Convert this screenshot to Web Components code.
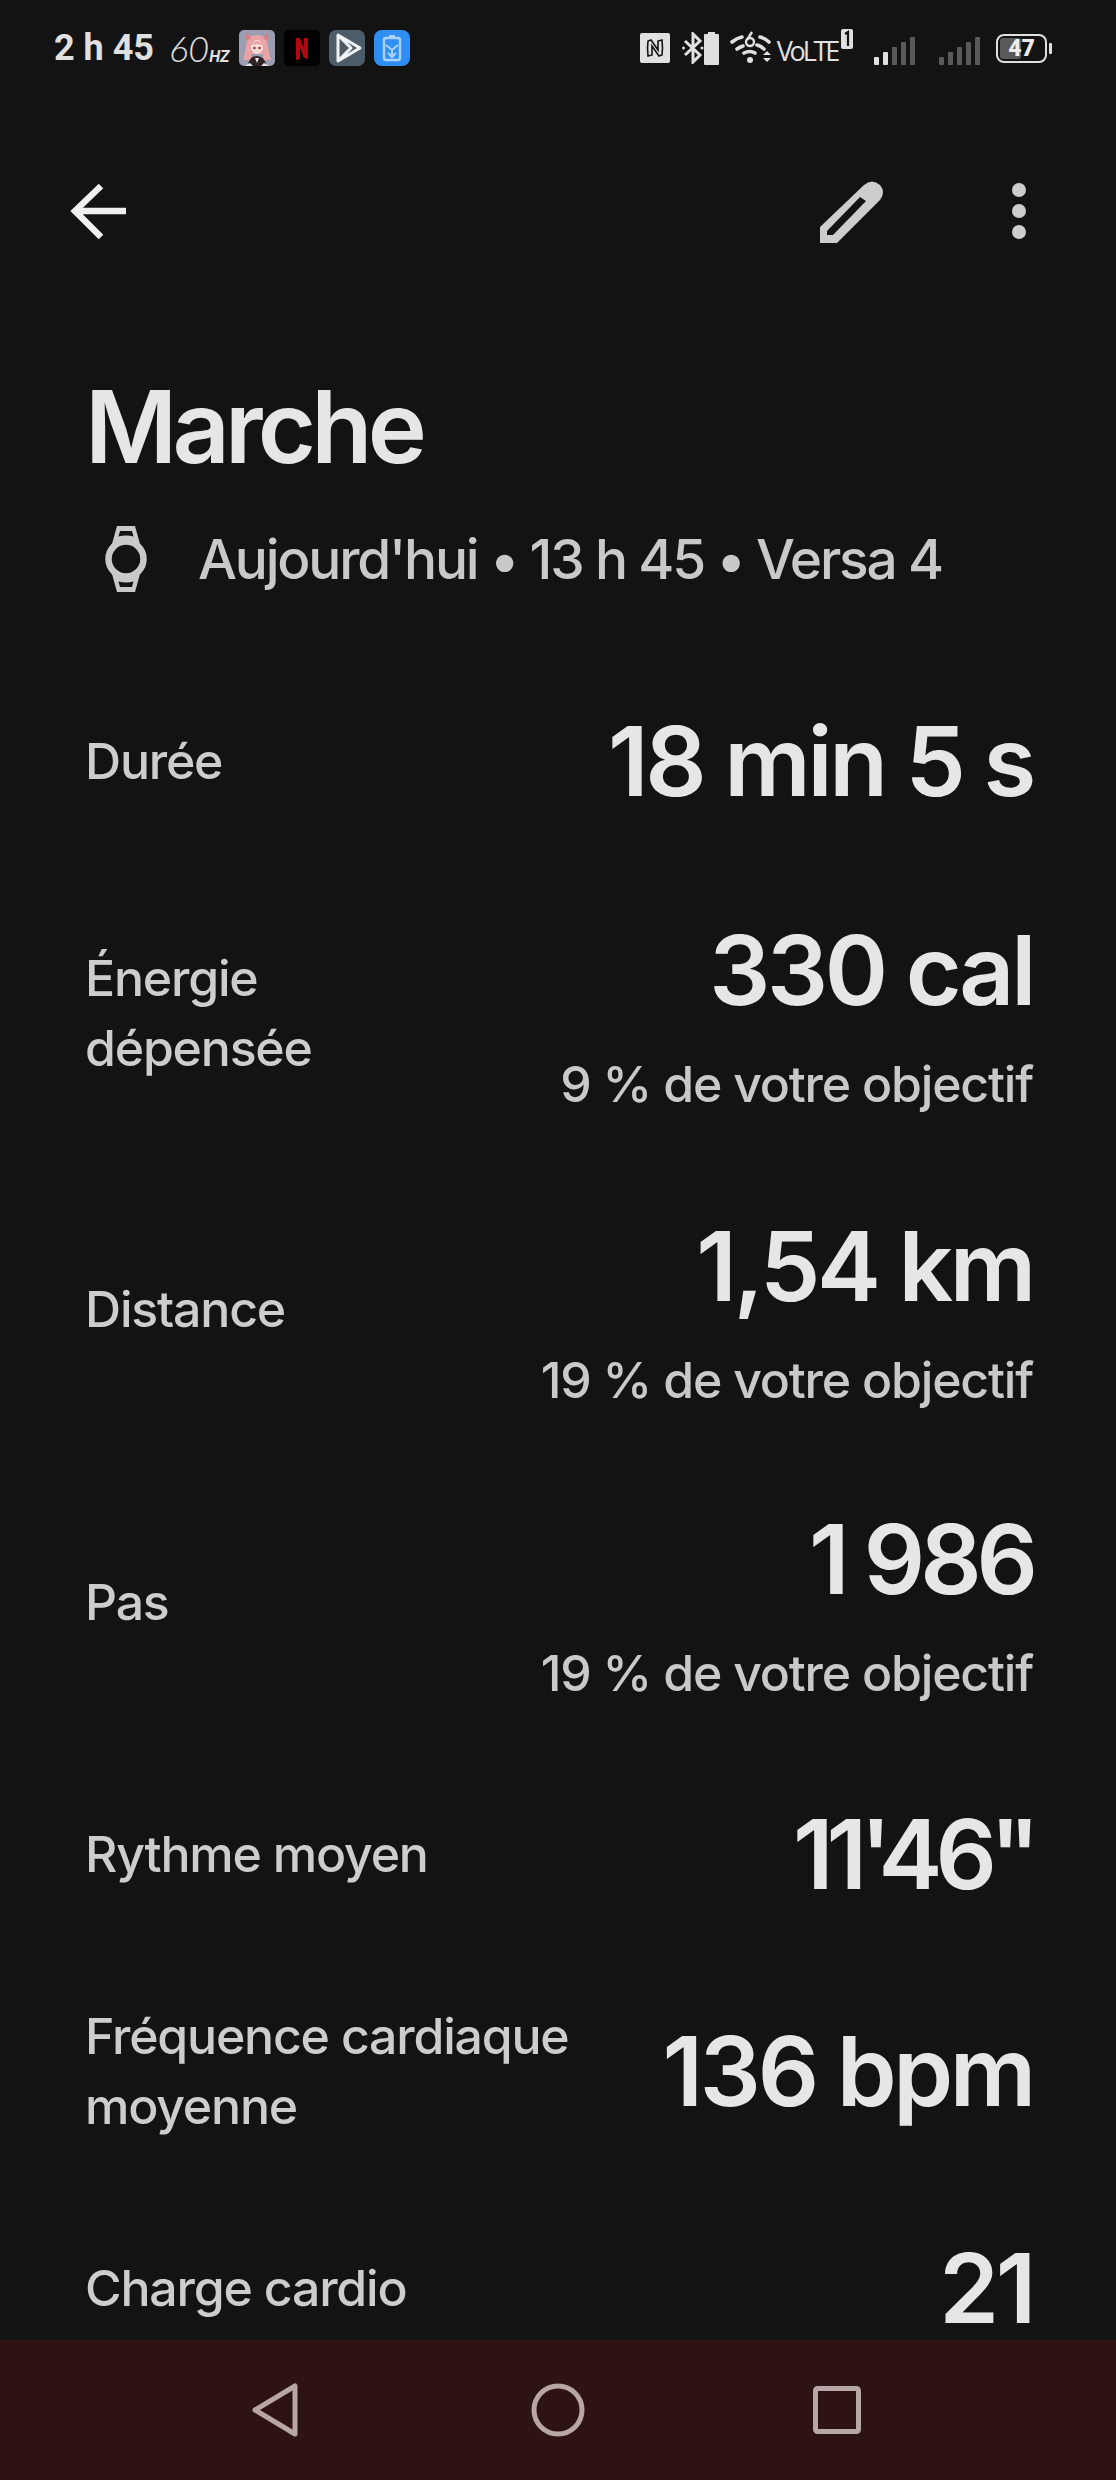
<!doctype html>
<html lang="fr">
<head>
<meta charset="utf-8">
<title>Marche</title>
<style>
  html, body { margin: 0; background: #131313; }
  body { font-family: Inter, "Noto Sans", sans-serif; }
</style>
</head>
<body>
<phone-screen>
  <status-bar></status-bar>
  <app-toolbar></app-toolbar>
  <workout-header heading="Marche" meta="Aujourd'hui • 13 h 45 • Versa 4"></workout-header>
  <stat-list>
    <stat-row><span slot="label">Durée</span><span slot="value">18 min 5 s</span></stat-row>
    <stat-row style="--gap: 79px"><span slot="label">Énergie<br>dépensée</span><span slot="value">330 cal</span><span slot="sub">9 % de votre objectif</span></stat-row>
    <stat-row style="--gap: 72px"><span slot="label">Distance</span><span slot="value">1,54 km</span><span slot="sub">19 % de votre objectif</span></stat-row>
    <stat-row style="--gap: 69px"><span slot="label">Pas</span><span slot="value" style="letter-spacing: -5px">1 986</span><span slot="sub">19 % de votre objectif</span></stat-row>
    <stat-row style="--gap: 71px"><span slot="label">Rythme moyen</span><span slot="value" style="letter-spacing: -7px">11'46"</span></stat-row>
    <stat-row style="--gap: 82px"><span slot="label">Fréquence cardiaque<br>moyenne</span><span slot="value">136 bpm</span></stat-row>
    <stat-row style="--gap: 92px; --value-lh: 110px"><span slot="label">Charge cardio</span><span slot="value">21</span></stat-row>
  </stat-list>
  <nav-bar></nav-bar>
</phone-screen>

<script>
// Page frame: full window column, the list takes what is left above the nav bar.
customElements.define('phone-screen', class extends HTMLElement {
  constructor() {
    super()
    this.attachShadow({ mode: 'open' }).innerHTML = `
      <style>
        :host { display: flex; flex-direction: column; height: 2480px; width: 1116px; overflow: hidden; background: #131313; color: #e3e3e3; }
      </style>
      <slot></slot>`
  }
})

customElements.define('status-bar', class extends HTMLElement {
  constructor() {
    super()
    this.attachShadow({ mode: 'open' }).innerHTML = `
      <style>
        :host { display: flex; align-items: center; height: 96px; padding: 0 64px 0 54px; box-sizing: border-box; color: #e0e0e0; flex: none; }
        .time { font: 700 36px Roboto, sans-serif; letter-spacing: 0; }
        .hz { font: italic 300 36px Lato, sans-serif; margin-left: 15px; width: 66px; white-space: nowrap; }
        .hz small { font: italic 700 16px Roboto, sans-serif; }
        .apps { display: flex; gap: 9px; margin-left: 4px; }
        .apps svg { display: block; width: 36px; height: 36px; }
        .right { margin-left: auto; display: flex; align-items: center; }
        svg { display: block; flex: none; }
      </style>
      <span class="time">2 h 45</span>
      <span class="hz">60<small>HZ</small></span>
      <div class="apps">
        <svg viewBox="0 0 36 36"><rect width="36" height="36" rx="5" fill="#9a9eb0"/><path d="M18 5q-10 0-11 11-1 8-3 14h8v-6h12v6h8q-2-6-3-14-1-11-11-11z" fill="#e9a3a6"/><path d="M8 2l4 7-6 1zM28 2l-4 7 6 1z" fill="#d77f84"/><ellipse cx="18" cy="17" rx="6" ry="7" fill="#f6dcd4"/><path d="M11 16q7-10 14 0-7-4-14 0z" fill="#e9a3a6"/><circle cx="15.5" cy="18" r="1.3" fill="#a03a44"/><circle cx="20.5" cy="18" r="1.3" fill="#a03a44"/><path d="M9 36q1-10 9-10t9 10z" fill="#2e2426"/><path d="M6 36l5-3 3 3zM30 36l-5-3-3 3zM16 28h4l-2 5z" fill="#ece6e2"/></svg>
        <svg viewBox="0 0 36 36"><rect width="36" height="36" rx="5" fill="#000"/><path d="M12 8h4l4 11V8h4v21l-4-1-4-10v11l-4 1z" fill="#b00a10"/></svg>
        <svg viewBox="0 0 36 36"><rect width="36" height="36" rx="7" fill="#4d5c69"/><path d="M9 5l22 13L9 31zM9 5l13 13L9 31" fill="none" stroke="#f2f4f5" stroke-width="3" stroke-linejoin="round"/></svg>
        <svg viewBox="0 0 36 36"><rect width="36" height="36" rx="8" fill="#2f8ff2"/><rect x="10" y="8" width="16" height="22" rx="2" fill="none" stroke="#a9d3fb" stroke-width="2.4"/><rect x="15" y="5" width="6" height="3" fill="#a9d3fb"/><path d="M12 15l6 5 6-5M18 20v6M14 23l4 4 4-4" fill="none" stroke="#a9d3fb" stroke-width="2"/></svg>
      </div>
      <div class="right">
        <svg width="30" height="30" viewBox="0 0 30 30" style="margin-right:12px"><rect width="30" height="30" rx="2" fill="#e0e0e0"/><path d="M8 8q-1 7 0 15l4-1V13l7 10 3-1q1-7 0-15l-4 1v9L11 7z" fill="none" stroke="#131313" stroke-width="1.6"/></svg>
        <svg width="22" height="32" viewBox="0 0 22 32"><path d="M3 9l15 14-7 7V2l7 7L3 23" fill="none" stroke="#e0e0e0" stroke-width="3"/><circle cx="1.5" cy="16" r="1.5" fill="#e0e0e0"/><circle cx="20" cy="16" r="1.5" fill="#e0e0e0"/></svg>
        <svg width="15" height="33" viewBox="0 0 15 33" style="margin-right:11px"><path d="M4 0h7v2h3a1 1 0 0 1 1 1v29a1 1 0 0 1-1 1H1a1 1 0 0 1-1-1V3a1 1 0 0 1 1-1h3z" fill="#e0e0e0"/></svg>
        <svg width="42" height="34" viewBox="0 0 42 34" style="margin-right:5px"><g fill="none" stroke="#e0e0e0" stroke-width="3.6" stroke-linecap="round"><path d="M2 11q5-4 10-5M7 18q3-2 6-3M30 6q5 1 9 5M27 14q4 1 7 4M14 22q6-3 11 0"/></g><circle cx="20" cy="29" r="3" fill="#e0e0e0"/><circle cx="20" cy="11" r="4" fill="none" stroke="#e0e0e0" stroke-width="2.4"/><path d="M22 1l-5 8" stroke="#e0e0e0" stroke-width="2.4"/><path d="M33 24l4-4 4 4zM33 27h8l-4 4z" fill="#e0e0e0"/></svg>
        <span style="font:500 27px 'Open Sans',sans-serif;letter-spacing:-3.2px;position:relative;top:2px">VoLTE</span>
        <svg width="12" height="20" viewBox="0 0 12 20" style="margin:-18px 21px 0 4px"><rect width="12" height="20" rx="2" fill="#e0e0e0"/><path d="M4 5l3-2v14" fill="none" stroke="#131313" stroke-width="2.2"/></svg>
        <svg width="42" height="28" viewBox="0 0 42 28" style="margin-top:6px"><g fill="#e0e0e0"><rect x="0" y="20" width="5" height="8" rx="1"/><rect x="9" y="15" width="5" height="13" rx="1"/></g><g fill="#5a5a5a"><rect x="18" y="10" width="5" height="18" rx="1"/><rect x="27" y="5" width="5" height="23" rx="1"/><rect x="36" y="0" width="5" height="28" rx="1"/></g></svg>
        <svg width="42" height="28" viewBox="0 0 42 28" style="margin:6px 15px 0 23px"><g fill="#5a5a5a"><rect x="0" y="20" width="5" height="8" rx="1"/><rect x="9" y="15" width="5" height="13" rx="1"/><rect x="18" y="10" width="5" height="18" rx="1"/><rect x="27" y="5" width="5" height="23" rx="1"/><rect x="36" y="0" width="5" height="28" rx="1"/></g></svg>
        <battery-pill level="47"></battery-pill>
      </div>`
  }
})

customElements.define('battery-pill', class extends HTMLElement {
  constructor() {
    super()
    this.attachShadow({ mode: 'open' }).innerHTML = `
      <style>
        :host { display: flex; align-items: center; gap: 2px; }
        .body { position: relative; box-sizing: border-box; width: 51px; height: 29px; border: 2.5px solid #e0e0e0; border-radius: 8px; display: flex; align-items: center; justify-content: center; font: 900 23px Roboto, sans-serif; color: #ededed; }
        .fill { position: absolute; left: 2px; top: 2px; bottom: 2px; width: 21px; background: #5a5a5a; border-radius: 3px; }
        span { position: relative; }
        .tip { width: 3px; height: 11px; background: #e0e0e0; border-radius: 1px; }
      </style>
      <div class="body"><div class="fill"></div><span>${this.getAttribute('level')}</span></div>
      <div class="tip"></div>`
  }
})

customElements.define('app-toolbar', class extends HTMLElement {
  constructor() {
    super()
    this.attachShadow({ mode: 'open' }).innerHTML = `
      <style>
        :host { display: flex; align-items: center; height: 100px; margin-top: 65px; padding: 0 89px 0 70px; flex: none; }
        svg { display: block; }
        .edit { margin-left: auto; margin-right: 127px; }
      </style>
      <svg width="60" height="60" viewBox="0 0 60 60"><path d="M56 30H6M31 5L5 30l26 26" fill="none" stroke="#f0f0f0" stroke-width="6.5"/></svg>
      <svg class="edit" width="64" height="66" viewBox="0 0 64 66"><path fill-rule="evenodd" d="M0 65V49L44 7Q52 0 60 7 66 14 60 22L17 65zM7 53L40 19l6 4L13 57H7z" fill="#cdcdcd"/></svg>
      <svg width="16" height="60" viewBox="0 0 16 60"><g fill="#cdcdcd"><circle cx="8" cy="9" r="7"/><circle cx="8" cy="30" r="7"/><circle cx="8" cy="51" r="7"/></g></svg>`
  }
})

customElements.define('workout-header', class extends HTMLElement {
  constructor() {
    super()
    this.attachShadow({ mode: 'open' }).innerHTML = `
      <style>
        :host { display: block; padding: 0 85px; margin-top: 106px; flex: none; }
        h1 { margin: 0; font-size: 100px; line-height: 120px; font-weight: 600; letter-spacing: -4.8px; color: #e6e6e6; }
        .meta { display: flex; align-items: center; margin-top: 37px; height: 70px; font-size: 55px; font-weight: 500; letter-spacing: -2.2px; color: #c9c9c9; }
        svg { display: block; margin: 0 51px 0 20px; flex: none; }
      </style>
      <h1>${this.getAttribute('heading')}</h1>
      <div class="meta">
        <svg width="42" height="68" viewBox="0 0 42 68"><circle cx="21" cy="34" r="17.5" fill="none" stroke="#c9c9c9" stroke-width="6.5"/><path fill-rule="evenodd" fill="#c9c9c9" d="M7 19L12 1h18l5 18-14-5zM15 6l-1.500 5.500q7.500-2 15 0L27 6zM7 49l5 18h18l5-18-14 5zM15 62l-1.500-5.500q7.500 2 15 0L27 62z"/></svg>
        <span>${this.getAttribute('meta')}</span>
      </div>`
  }
})

customElements.define('stat-list', class extends HTMLElement {
  constructor() {
    super()
    this.attachShadow({ mode: 'open' }).innerHTML = `
      <style>
        :host { display: block; flex: 1; min-height: 0; padding: 102px 83px 0 85px; }
      </style>
      <slot></slot>`
  }
})

customElements.define('stat-row', class extends HTMLElement {
  constructor() {
    super()
    this.attachShadow({ mode: 'open' }).innerHTML = `
      <style>
        :host { display: flex; align-items: center; justify-content: space-between; margin-top: var(--gap, 0); }
        .label { font-size: 50px; line-height: 70px; font-weight: 500; letter-spacing: -1.2px; color: #cdcdcd; }
        .label.with-sub { margin-bottom: 8px; }
        .right { text-align: right; white-space: nowrap; }
        .value { display: block; font-size: 96px; line-height: var(--value-lh, 130px); font-weight: 600; letter-spacing: -3.3px; color: #e6e6e6; }
        .sub { display: block; margin-top: 4px; font-size: 50px; line-height: 90px; font-weight: 500; letter-spacing: -1.2px; color: #c9c9c9; }
      </style>
      <div class="label"><slot name="label"></slot></div>
      <div class="right">
        <div class="value"><slot name="value"></slot></div>
        <div class="sub"><slot name="sub"></slot></div>
      </div>`
    if (this.querySelector('[slot="sub"]')) {
      this.shadowRoot.querySelector('.label').classList.add('with-sub')
    } else {
      this.shadowRoot.querySelector('.sub').style.display = 'none'
    }
  }
})

customElements.define('nav-bar', class extends HTMLElement {
  constructor() {
    super()
    this.attachShadow({ mode: 'open' }).innerHTML = `
      <style>
        :host { display: flex; align-items: center; justify-content: center; height: 140px; padding-right: 3px; box-sizing: border-box; background: #2e1314; flex: none; position: relative; }
        svg { display: block; }
        .home { margin: 0 228px 0 233px; }
      </style>
      <svg width="46" height="54" viewBox="0 0 46 54"><path d="M43 3v48L3 27z" fill="none" stroke="#b8a5a5" stroke-width="5" stroke-linejoin="round"/></svg>
      <svg class="home" width="54" height="54" viewBox="0 0 54 54"><circle cx="27" cy="27" r="24" fill="none" stroke="#b8a5a5" stroke-width="5"/></svg>
      <svg width="48" height="48" viewBox="0 0 48 48"><rect x="2.500" y="2.500" width="43" height="43" rx="2" fill="none" stroke="#b8a5a5" stroke-width="5"/></svg>`
  }
})
</script>
</body>
</html>
